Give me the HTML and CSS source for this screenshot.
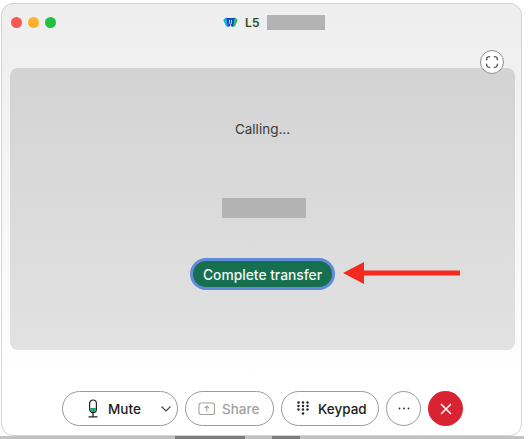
FILE: index.html
```html
<!DOCTYPE html>
<html lang="en">
<head>
    <meta charset="UTF-8">
    <title>Call window</title>
    <link rel="stylesheet" href="styles.css">
</head>
<body>
    <div class="backdrop">
        <span class="backdrop-bit backdrop-bit-a"></span>
        <span class="backdrop-bit backdrop-bit-b"></span>
    </div>
    <div class="window">
        <div class="titlebar">
            <div class="traffic">
                <span class="light light-red"></span>
                <span class="light light-yellow"></span>
                <span class="light light-green"></span>
            </div>
            <div class="title">
                <svg class="app-logo" width="15" height="11" viewBox="0 0 15 11">
                    <path d="M0.3 3C1.6 1 3.4 0.6 5 1L6.5 8C5.8 10.4 3.6 10.6 2.6 8.6Z" fill="#18b4dc"/>
                    <path d="M10 1C11.6 0.6 13.4 1 14.7 3L12.4 8.6C11.4 10.6 9.2 10.4 8.5 8Z" fill="#2dbb6e"/>
                    <path d="M3.4 1H11.6L10.4 8.2C10 10.2 8.2 10 7.9 8.2L7.5 5.4L7.1 8.2C6.8 10 5 10.2 4.6 8.2Z" fill="#1746c8"/>
                    <path d="M6 3H6.9L6.6 7H6.1ZM8.1 3H9L8.9 7H8.4Z" fill="#fff"/>
                </svg>
                <span class="title-text">L5</span>
                <span class="redact redact-title"></span>
            </div>
        </div>
        <button class="expand">
            <svg width="16" height="16" viewBox="0 0 16 16" fill="none" stroke="#333" stroke-width="1.3" stroke-linecap="round">
                <path d="M2 5.5V4.2A2.2 2.2 0 0 1 4.2 2H5.5"/>
                <path d="M10.5 2H11.8A2.2 2.2 0 0 1 14 4.2V5.5"/>
                <path d="M14 10.5V11.8A2.2 2.2 0 0 1 11.8 14H10.5"/>
                <path d="M5.5 14H4.2A2.2 2.2 0 0 1 2 11.8V10.5"/>
            </svg>
        </button>
        <div class="stage">
            <div class="status">Calling...</div>
            <span class="redact redact-name"></span>
            <button class="transfer">Complete transfer</button>
            <svg class="arrow" width="120" height="26" viewBox="0 0 120 26">
                <path d="M0 13L21 2V10.5H117V15.5H21V24Z" fill="#f5291c"/>
            </svg>
        </div>
        <div class="toolbar">
            <div class="pill pill-mute">
                <svg width="16" height="20" viewBox="0 0 16 20" fill="none">
                    <rect x="4.6" y="1" width="6.8" height="12.6" rx="3.4" stroke="#222" stroke-width="1.2"/>
                    <path d="M5.2 9H10.8V10.2A2.8 2.8 0 0 1 5.2 10.2Z" fill="#1f9e78"/>
                    <path d="M8 14V17.5M3.5 17.8H12.5" stroke="#222" stroke-width="1.3"/>
                </svg>
                <span>Mute</span>
                <svg class="chevron" width="12" height="8" viewBox="0 0 12 8" fill="none" stroke="#444" stroke-width="1.1">
                    <path d="M1.5 1.5L6 6L10.5 1.5"/>
                </svg>
            </div>
            <div class="pill pill-share">
                <svg width="18" height="14" viewBox="0 0 18 14" fill="none" stroke="#a2a2a2" stroke-width="1.1">
                    <rect x="1" y="1" width="15.5" height="11.5" rx="2.2"/>
                    <path d="M8.8 9.5V4.2M6.6 6.2L8.8 4L11 6.2"/>
                </svg>
                <span>Share</span>
            </div>
            <div class="pill pill-keypad">
                <svg width="12" height="15" viewBox="0 0 12 15" fill="#222">
                    <circle cx="1.5" cy="1.5" r="1.2"/><circle cx="6" cy="1.5" r="1.2"/><circle cx="10.5" cy="1.5" r="1.2"/>
                    <circle cx="1.5" cy="5" r="1.2"/><circle cx="6" cy="5" r="1.2"/><circle cx="10.5" cy="5" r="1.2"/>
                    <circle cx="1.5" cy="8.5" r="1.2"/><circle cx="6" cy="8.5" r="1.2"/><circle cx="10.5" cy="8.5" r="1.2"/>
                    <circle cx="6" cy="12.5" r="1.3"/>
                </svg>
                <span>Keypad</span>
            </div>
            <div class="pill pill-more">
                <svg width="12" height="3" viewBox="0 0 12 3" fill="#333">
                    <circle cx="1.5" cy="1.5" r="0.9"/><circle cx="6" cy="1.5" r="0.9"/><circle cx="10.5" cy="1.5" r="0.9"/>
                </svg>
            </div>
            <div class="hangup">
                <svg width="14" height="14" viewBox="0 0 14 14" fill="none" stroke="#fff" stroke-width="1.5">
                    <path d="M2 2L12 12M12 2L2 12"/>
                </svg>
            </div>
        </div>
    </div>
</body>
</html>
```
FILE: styles.css
```css
html, body {
    height: 100%;
}
body {
    margin: 0;
    background: #fff;
    font-family: 'Inter', 'Liberation Sans', sans-serif;
    overflow: hidden;
}
.backdrop {
    position: absolute;
    left: 0;
    right: 4px;
    bottom: 0;
    height: 3px;
    background: #c2c2c2;
}
.backdrop-bit {
    position: absolute;
    top: 0;
    height: 3px;
    background: #7d7d7d;
}
.backdrop-bit-a {
    left: 175px;
    width: 70px;
}
.backdrop-bit-b {
    left: 272px;
    width: 28px;
}
.window {
    position: relative;
    box-sizing: border-box;
    width: 521px;
    height: 433px;
    margin: 3px 0 0 1px;
    display: flex;
    flex-direction: column;
    background: linear-gradient(180deg, #eeeeee 0%, #f1f1f1 20%, #ffffff 88%);
    border: 1px solid #d4d4d4;
    border-radius: 12px;
}
.titlebar {
    height: 64px;
    flex: none;
    display: flex;
    position: relative;
}
.traffic {
    display: flex;
    gap: 6px;
    margin: 13px 0 0 9px;
    height: 11px;
}
.light {
    width: 11px;
    height: 11px;
    border-radius: 50%;
}
.light-red { background: #fc5753; }
.light-yellow { background: #fdb02f; }
.light-green { background: #1fc23f; }
.title {
    position: absolute;
    left: 221px;
    top: 11px;
    display: flex;
    align-items: center;
    gap: 7px;
    height: 15px;
}
.title-text {
    font-size: 12px;
    font-weight: 600;
    color: #2f4a24;
    letter-spacing: 0.3px;
}
.redact {
    display: block;
    background: #b3b3b3;
}
.redact-title {
    width: 58px;
    height: 15px;
}
.expand {
    position: absolute;
    left: 478px;
    top: 46px;
    width: 24px;
    height: 24px;
    padding: 0;
    display: flex;
    align-items: center;
    justify-content: center;
    background: #fff;
    border: 1px solid #8c8c8c;
    border-radius: 50%;
    z-index: 2;
}
.expand svg {
    width: 14px;
    height: 14px;
}
.stage {
    position: relative;
    margin: 0 6px 0 8px;
    height: 282px;
    flex: none;
    border-radius: 8px;
    background: linear-gradient(180deg, #d3d3d3 0%, #e2e2e2 100%);
    display: flex;
    flex-direction: column;
    align-items: center;
}
.status {
    margin-top: 53px;
    font-size: 13.5px;
    line-height: 17px;
    color: #3a3a3a;
}
.redact-name {
    margin: 60px 0 0 2px;
    width: 84px;
    height: 20px;
}
.transfer {
    margin-top: 40px;
    box-sizing: border-box;
    width: 145px;
    height: 32px;
    padding: 1px 0 0;
    background: #16704f;
    color: #f4f8f5;
    border: 3px solid #5f8bd8;
    border-radius: 16px;
    font-family: inherit;
    font-size: 13.8px;
    font-weight: 500;
}
.arrow {
    position: absolute;
    left: 333px;
    top: 192px;
}
.toolbar {
    flex: 1;
    display: flex;
    align-items: flex-start;
    padding: 41px 0 0 60px;
    gap: 7px;
}
.pill {
    box-sizing: border-box;
    height: 35px;
    display: flex;
    align-items: center;
    border: 1px solid #9a9a9a;
    border-radius: 18px;
    background: #fff;
    font-size: 13.5px;
    font-weight: 500;
    color: #1c1c1c;
}
.pill-mute {
    width: 116px;
    padding-left: 22px;
    gap: 7px;
}
.chevron {
    margin-left: 12px;
}
.pill-share {
    width: 89px;
    padding-left: 12px;
    gap: 6px;
    color: #a2a2a2;
}
.pill-keypad {
    width: 98px;
    padding-left: 15px;
    gap: 9px;
}
.pill-more {
    width: 35px;
    justify-content: center;
}
.hangup {
    width: 35px;
    height: 35px;
    border-radius: 50%;
    background: #d92232;
    display: flex;
    align-items: center;
    justify-content: center;
}
```
